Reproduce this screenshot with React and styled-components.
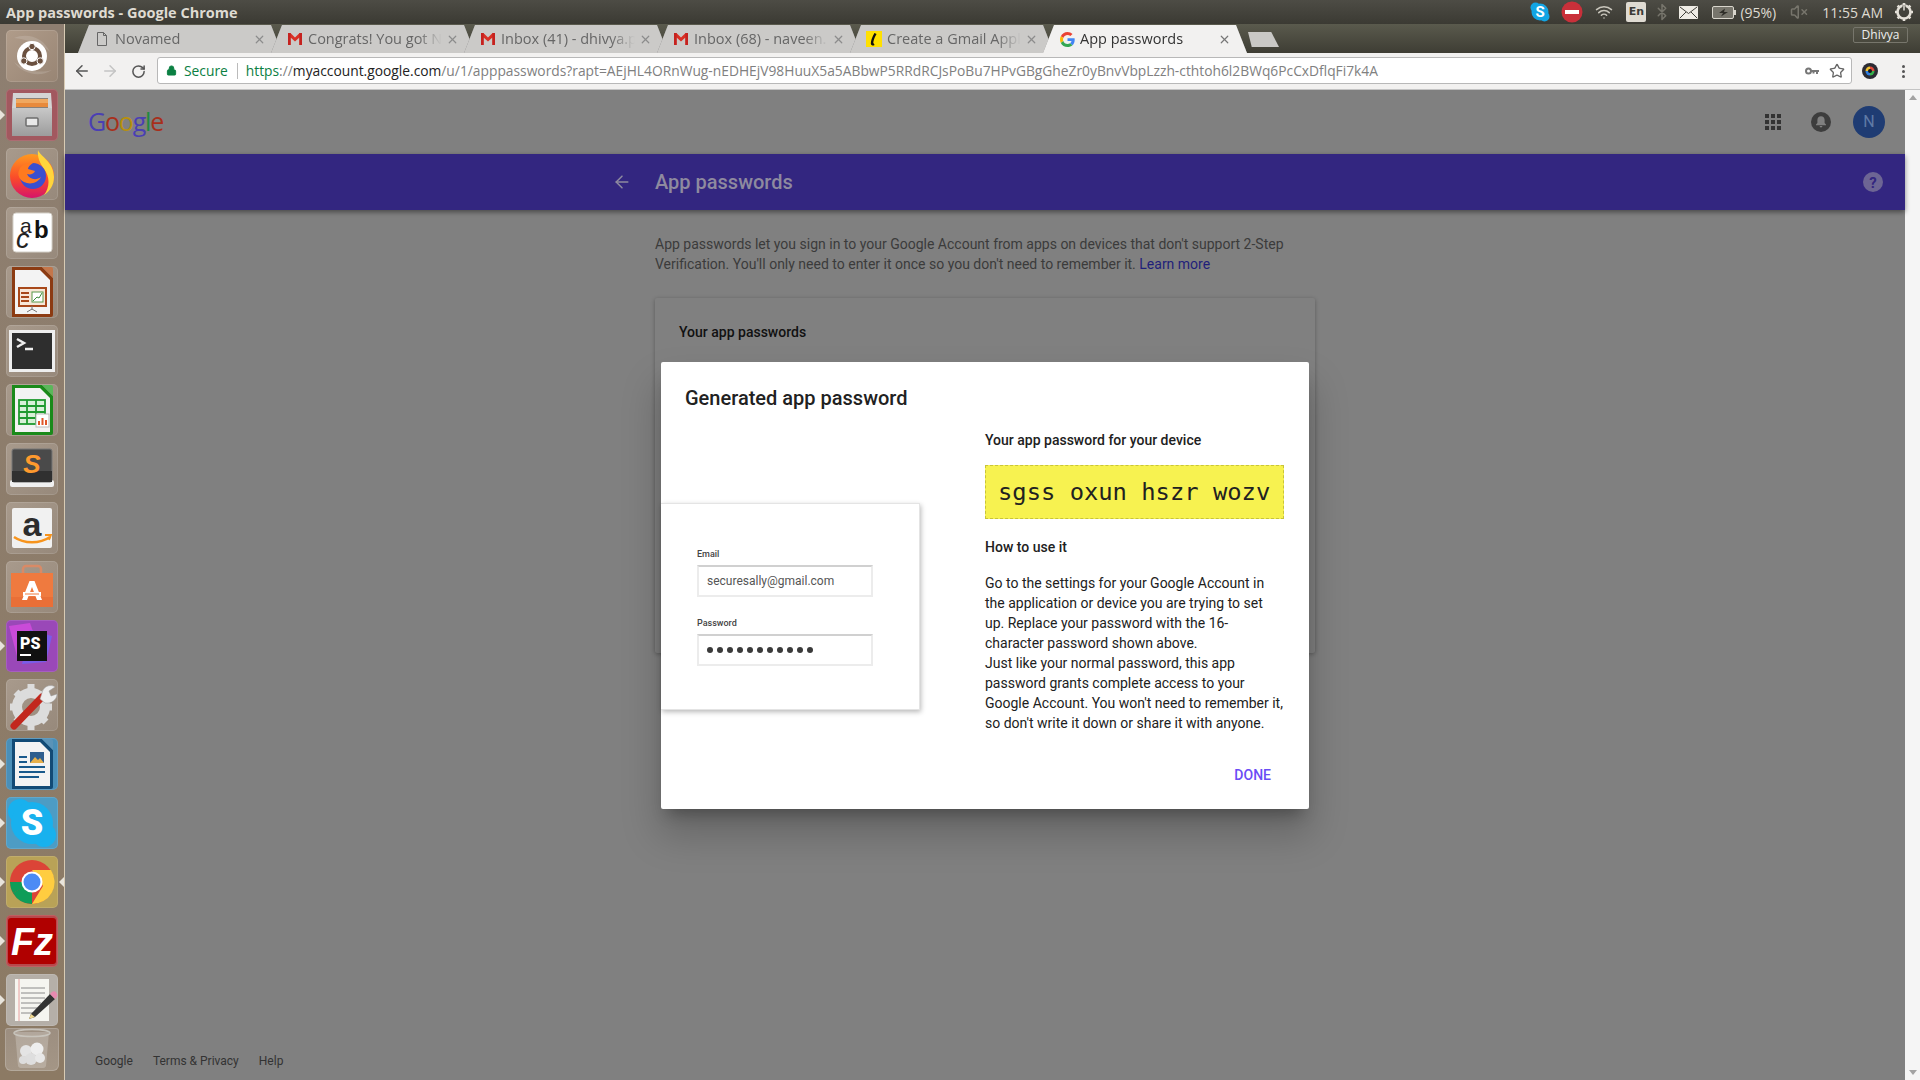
import React from "react"
import styled, { createGlobalStyle } from "styled-components"
import { ArrowLeft, ArrowRight, RotateCw, Lock, Star, Wifi, Bluetooth, VolumeX, X } from "lucide-react"

const GlobalStyle = createGlobalStyle`
  html, body { margin: 0; padding: 0; background: #808080; }
  * { box-sizing: border-box; }
  body { font-family: Roboto, "Liberation Sans", sans-serif; }
`

const GmailIcon = () => (
  <svg width="14" height="12" viewBox="0 0 14 12">
    <path d="M0 0h2.4L7 4.4 11.6 0H14v12h-2.6V4.6L7 8.6 2.6 4.6V12H0z" fill="#d93025" />
    <path d="M0 0h2.6v12H0zM11.4 0H14v12h-2.6z" fill="#c5221f" />
  </svg>
)

const FileIcon = () => (
  <svg width="12" height="14" viewBox="0 0 12 14" fill="none" stroke="#666" strokeWidth="1">
    <path d="M1.5 .5h6l3 3v10h-9zM7.5 .5v3h3" />
  </svg>
)

const GoogleG = () => (
  <svg width="15" height="15" viewBox="0 0 48 48">
    <path fill="#EA4335" d="M24 9.5c3.5 0 6.7 1.2 9.2 3.6l6.9-6.9C35.9 2.4 30.5 0 24 0 14.6 0 6.5 5.4 2.6 13.2l8 6.2C12.4 13.7 17.7 9.5 24 9.5z" />
    <path fill="#4285F4" d="M47 24.5c0-1.6-.1-3.100-.4-4.500H24v9h12.900c-.6 3-2.200 5.500-4.700 7.200l7.700 6C44.400 38.500 47 32.100 47 24.500z" />
    <path fill="#FBBC05" d="M10.600 28.600c-.5-1.400-.8-3-.8-4.600s.3-3.200.8-4.600l-8-6.200C.9 16.500 0 20.100 0 24s.9 7.500 2.600 10.800z" />
    <path fill="#34A853" d="M24 48c6.500 0 11.900-2.100 15.900-5.800l-7.700-6c-2.200 1.400-4.900 2.300-8.200 2.300-6.300 0-11.600-4.200-13.400-9.900l-8 6.200C6.500 42.600 14.600 48 24 48z" />
  </svg>
)

const LetterIcon = () => (
  <YellowFav>
    <svg width="16" height="16" viewBox="0 0 16 16">
      <path d="M9.500 2.500C7.500 6 6 10 6 12.500c0 1 .8 1.200 2 .5" fill="none" stroke="#111" strokeWidth="2.400" />
    </svg>
  </YellowFav>
)

const SkypeSmall = () => (
  <svg width="22" height="22" viewBox="0 0 22 22">
    <circle cx="6.500" cy="6.500" r="5" fill="#12a5e4" />
    <circle cx="15.500" cy="15.500" r="5" fill="#12a5e4" />
    <circle cx="11" cy="11" r="8.500" fill="#12a5e4" />
    <text x="11" y="16" textAnchor="middle" fontFamily="Roboto" fontWeight="700" fontSize="15" fill="#fff">S</text>
  </svg>
)

const NoEntry = () => (
  <svg width="22" height="22" viewBox="0 0 22 22">
    <circle cx="11" cy="11" r="10.500" fill="#c9303a" />
    <rect x="4" y="9" width="14" height="4" fill="#fff" />
  </svg>
)

const EnvelopeIcon = () => (
  <svg width="19" height="13" viewBox="0 0 19 13">
    <rect width="19" height="13" rx="1" fill="#efece5" />
    <path d="M1 1l8.500 6.500L18 1M1 12l6-6M18 12l-6-6" fill="none" stroke="#3f3e38" strokeWidth="1" />
  </svg>
)

const BatteryIcon = () => (
  <svg width="24" height="13" viewBox="0 0 24 13">
    <rect x=".5" y=".5" width="21" height="12" rx="1.500" fill="#77756c" stroke="#d8d5cc" />
    <rect x="22" y="4" width="2" height="5" fill="#d8d5cc" />
    <path d="M13 2.500 7 7h4l-2 3.500L16 6h-4z" fill="#2f2e29" />
  </svg>
)

const PowerCog = () => (
  <svg width="20" height="20" viewBox="0 0 20 20">
    <circle cx="10" cy="10" r="6.500" fill="none" stroke="#e4e0d8" strokeWidth="2.600" />
    <path d="M10 1v2M10 17v2M1 10h2M17 10h2M3.600 3.600 5 5M15 15l1.400 1.400M16.400 3.600 15 5M5 15l-1.400 1.400" stroke="#e4e0d8" strokeWidth="2.600" />
    <path d="M10 3.500v6" stroke="#3f3e38" strokeWidth="3" />
    <path d="M10 3.500v5" stroke="#e4e0d8" strokeWidth="1.500" />
  </svg>
)

const KeyIcon = () => (
  <svg width="14" height="8" viewBox="0 0 14 8">
    <circle cx="3.500" cy="4" r="2.500" fill="none" stroke="#777" strokeWidth="2" />
    <path d="M6 3h8v2h-1v2h-2V5H9.500v1.500h-2V5H6z" fill="#777" />
  </svg>
)

const AppsGrid = () => (
  <svg width="16" height="16" viewBox="0 0 16 16" fill="#333">
    {[0, 6, 12].map(y =>
      [0, 6, 12].map(x => <rect key={`${x}-${y}`} x={x} y={y} width="4" height="4" />)
    )}
  </svg>
)

const BellIcon = () => (
  <svg width="20" height="20" viewBox="0 0 20 20">
    <circle cx="10" cy="10" r="10" fill="#3d3d3d" />
    <path d="M10 4.200c-2.200 0-3.600 1.700-3.600 3.800v3L5 12.500v.7h10v-.7L13.600 11V8c0-2.100-1.400-3.800-3.600-3.800zM8.600 14h2.800a1.400 1.400 0 0 1-2.800 0z" fill="#808080" />
  </svg>
)

const HelpIcon = () => (
  <svg width="20" height="20" viewBox="0 0 20 20">
    <circle cx="10" cy="10" r="10" fill="#6d6594" />
    <text x="10" y="15.500" textAnchor="middle" fontFamily="Roboto" fontWeight="700" fontSize="15" fill="#332680">?</text>
  </svg>
)

const ExtensionIcon = () => (
  <svg width="16" height="16" viewBox="0 0 16 16">
    <circle cx="8" cy="8" r="8" fill="#2c2c34" />
    <path d="M8 3.500a4.500 4.500 0 0 1 4.500 4.500H8z" fill="#e04a3a" />
    <path d="M12.500 8A4.500 4.500 0 0 1 8 12.500V8z" fill="#37b24d" />
    <path d="M8 12.500A4.500 4.500 0 0 1 3.500 8H8z" fill="#2f7fe0" />
    <path d="M3.500 8A4.500 4.500 0 0 1 8 3.500V8z" fill="#f2c230" />
    <circle cx="8" cy="8" r="2" fill="#16161c" />
  </svg>
)

// Launcher icons
const DashIcon = () => (
  <svg width="52" height="52" viewBox="0 0 52 52">
    <path d="M8 8c14-6 30 0 36 14-8-8-20-12-36-14zM46 40C34 48 16 44 8 32c10 8 24 12 38 8z" fill="#fff" opacity=".14" />
    <circle cx="26" cy="26" r="15" fill="#fff" />
    <circle cx="26" cy="26" r="8" fill="none" stroke="#6b5140" strokeWidth="4" />
    <circle cx="26" cy="16.500" r="3.200" fill="#6b5140" stroke="#fff" />
    <circle cx="17.800" cy="31" r="3.200" fill="#6b5140" stroke="#fff" />
    <circle cx="34.200" cy="31" r="3.200" fill="#6b5140" stroke="#fff" />
  </svg>
)

const FilesIcon = () => (
  <svg width="52" height="52" viewBox="0 0 52 52">
    <defs>
      <linearGradient id="cabinetFront" x1="0" y1="0" x2="0" y2="1">
        <stop offset="0" stopColor="#c8c8c8" />
        <stop offset="1" stopColor="#9c9c9c" />
      </linearGradient>
    </defs>
    <path d="M7 4h38l1 15H6z" fill="#d4d4d4" />
    <path d="M10 9h32v10H10z" fill="#8a8078" />
    <path d="M10 10h32v4H10z" fill="#f0a860" />
    <path d="M10 14h32v4H10z" fill="#e88a3c" />
    <path d="M6 19h40v28H6z" fill="url(#cabinetFront)" />
    <rect x="20" y="29" width="12" height="8" rx="1" fill="#e8e8e8" stroke="#6c6c6c" strokeWidth="1.500" />
  </svg>
)

const FirefoxIcon = () => (
  <svg width="52" height="52" viewBox="0 0 52 52">
    <defs>
      <linearGradient id="ffBody" x1="0" y1="0" x2="0" y2="1">
        <stop offset="0" stopColor="#ff9a1f" />
        <stop offset=".55" stopColor="#fa4a2a" />
        <stop offset="1" stopColor="#d6146a" />
      </linearGradient>
    </defs>
    <circle cx="26" cy="28" r="22" fill="url(#ffBody)" />
    <path d="M32 2c2 6 16 12 16 27 0 8-4 14-10 18 6-8 6-18 0-26-4-6-7-12-6-19z" fill="#ffd53c" />
    <circle cx="27" cy="28" r="13" fill="#3a4fd0" />
    <path d="M14 20c3-4 8-6 13-5-3 2-5 4-5 6l7 2c-1 3-5 4-8 3 2 5 9 7 14 3-3 6-11 8-17 5-6-3-7-9-4-14z" fill="#ff7a1f" />
  </svg>
)

const AbcIcon = () => (
  <svg width="52" height="52" viewBox="0 0 52 52">
    <rect x="7" y="6" width="39" height="39" rx="3" fill="#fff" stroke="#d4d0c8" />
    <text x="14" y="26" fontFamily="Liberation Sans" fontSize="21" fill="#222">a</text>
    <text x="28" y="31" fontFamily="Liberation Sans" fontWeight="700" fontSize="24" fill="#111">b</text>
    <text x="10" y="41" fontFamily="Liberation Sans" fontStyle="italic" fontSize="27" fill="#222">c</text>
  </svg>
)

const OfficeDoc = ({ color, corner, children }) => (
  <svg width="52" height="52" viewBox="0 0 52 52">
    <path d="M6 1h30l11 11v37a2 2 0 0 1-2 2H6z" fill={color} />
    <path d="M9 4h25l10 10v34H9z" fill="#f3f3f3" />
    <path d="M36 1h9a2 2 0 0 1 2 2v9z" fill={corner} />
    {children}
  </svg>
)

const ImpressIcon = () => (
  <OfficeDoc color="#8c3b12" corner="#c4764a">
    <rect x="13" y="22" width="27" height="18" fill="#f7e7d8" stroke="#a8481a" strokeWidth="2" />
    <path d="M15 26h8v2h-8zM15 30h8v2h-8zM15 34h8v2h-8z" fill="#a8481a" />
    <rect x="26" y="26" width="11" height="10" fill="#fff" stroke="#5a9a4a" />
    <path d="M27 35l4-4 2 1 3-5" stroke="#3c8a3c" fill="none" />
    <path d="M26 40v4M21 46l5-3 5 3" stroke="#777" fill="none" />
  </OfficeDoc>
)

const TerminalIcon = () => (
  <svg width="52" height="52" viewBox="0 0 52 52">
    <rect x="3" y="5" width="46" height="42" fill="#eee" />
    <rect x="6" y="8" width="40" height="36" fill="#2e2e2e" />
    <path d="M11 14l7 4-7 4" stroke="#eee" strokeWidth="2.500" fill="none" />
    <path d="M19 24h8" stroke="#eee" strokeWidth="2.500" />
  </svg>
)

const CalcIcon = () => (
  <OfficeDoc color="#1a8a1a" corner="#5ab85a">
    <g fill="#fff" stroke="#1f9a2f" strokeWidth="1.800">
      <rect x="13" y="16" width="26" height="24" fill="#d8f0d8" />
      <path d="M13 22h26M13 28h26M13 34h26M21 16v24M30 16v24" fill="none" />
    </g>
    <rect x="30" y="30" width="13" height="13" fill="#fff" stroke="#bbb" />
    <path d="M33 41v-4M36.500 41v-7M40 41v-5" strokeWidth="2" stroke="#e0562a" />
  </OfficeDoc>
)

const SublimeIcon = () => (
  <svg width="52" height="52" viewBox="0 0 52 52">
    <rect x="4" y="37" width="44" height="7" rx="2" fill="#f0f0f0" />
    <rect x="6" y="6" width="40" height="33" rx="2" fill="#4a4a4a" stroke="#777" />
    <path d="M6 28h40v11H6z" fill="#303030" />
    <text x="26" y="30" textAnchor="middle" fontFamily="Liberation Sans" fontStyle="italic" fontWeight="700" fontSize="26" fill="#ff9a2e">S</text>
  </svg>
)

const AmazonIcon = () => (
  <svg width="52" height="52" viewBox="0 0 52 52">
    <rect x="6" y="6" width="40" height="40" rx="2" fill="#f1f1f1" />
    <text x="26" y="34" textAnchor="middle" fontFamily="Liberation Sans" fontWeight="700" fontSize="34" fill="#2d2d2d">a</text>
    <path d="M8 35c10 7 26 7 36 0" fill="none" stroke="#f7941d" strokeWidth="2.500" />
    <path d="M39 33h6l-2 5" fill="none" stroke="#f7941d" strokeWidth="1.800" />
  </svg>
)

const StoreIcon = () => (
  <svg width="52" height="52" viewBox="0 0 52 52">
    <path d="M17 13V8a3 3 0 0 1 3-3h12a3 3 0 0 1 3 3v5" fill="none" stroke="#d98a66" strokeWidth="2.500" />
    <path d="M5 12h42v34H5z" fill="#ef7a3f" />
    <path d="M5 36h42v10H5z" fill="#e96f37" />
    <path d="M23.500 20h5L36 39h-5l-5-13-5 13h-5z" fill="#fff" />
    <path d="M17 31h18v4H17z" fill="#fff" />
    <path d="M19 33h14" stroke="#ef7a3f" />
  </svg>
)

const PhpStormIcon = () => (
  <svg width="52" height="52" viewBox="0 0 52 52">
    <path d="M3 6 24 3 30 20 12 40z" fill="#c94bd8" />
    <path d="M24 10 46 16 40 42 16 44z" fill="#7a5ce8" />
    <rect x="11" y="11" width="30" height="30" fill="#111" />
    <text x="14" y="29" fontFamily="Roboto" fontWeight="900" fontSize="16" fill="#fff">PS</text>
    <rect x="14" y="34" width="11" height="2" fill="#fff" />
  </svg>
)

const ToolsIcon = () => (
  <svg width="52" height="52" viewBox="0 0 52 52">
    <circle cx="25" cy="28" r="14" fill="none" stroke="#dcdcdc" strokeWidth="10" />
    <path d="M25 5v6M25 45v6M4 28h6M40 28h6M10 13l5 5M35 38l5 5M40 13l-5 5M15 38l-5 5" stroke="#dcdcdc" strokeWidth="7" />
    <path d="M8 47 36 18" stroke="#c2281e" strokeWidth="7" strokeLinecap="round" />
    <path d="M34 20l3-9c2-4 8-6 12-3l-6 4 2 5 6-2c0 6-6 10-12 9z" fill="#ececec" stroke="#999" strokeWidth=".5" />
  </svg>
)

const WriterIcon = () => (
  <OfficeDoc color="#124a75" corner="#5a93b8">
    <path d="M13 18h8v2h-8zM13 23h8v2h-8zM13 28h26v2H13zM13 33h26v2H13zM13 38h20v2H13z" fill="#1a5a8c" />
    <rect x="24" y="14" width="14" height="11" fill="#2e5e8e" />
    <path d="M24 25l5-6 3 3 2-2 4 5z" fill="#e8b04a" />
  </OfficeDoc>
)

const SkypeIcon = () => (
  <svg width="52" height="52" viewBox="0 0 52 52">
    <circle cx="14" cy="14" r="12" fill="#18b1ee" />
    <circle cx="38" cy="38" r="12" fill="#18b1ee" />
    <circle cx="26" cy="26" r="21" fill="#18b1ee" />
    <text x="26" y="38" textAnchor="middle" fontFamily="Roboto" fontWeight="900" fontSize="36" fill="#fff">S</text>
  </svg>
)

const ChromeIcon = () => (
  <svg width="52" height="52" viewBox="0 0 52 52">
    <circle cx="26" cy="26" r="22" fill="#db4437" />
    <path d="M26 26 7 37A22 22 0 0 0 26 48z" fill="#0f9d58" />
    <path d="M26 26H4v0a22 22 0 0 0 3 11l11-6z" fill="#0f9d58" />
    <path d="M26 14h19a22 22 0 0 1-19 34l11-18z" fill="#ffcd40" />
    <circle cx="26" cy="26" r="10.500" fill="#fff" />
    <circle cx="26" cy="26" r="8.500" fill="#4c8bf5" />
  </svg>
)

const FileZillaIcon = () => (
  <svg width="52" height="52" viewBox="0 0 52 52">
    <rect x="2" y="3" width="48" height="46" rx="3" fill="#b00000" />
    <text x="26" y="40" textAnchor="middle" fontFamily="Liberation Sans" fontStyle="italic" fontWeight="700" fontSize="38" fill="#fff">Fz</text>
  </svg>
)

const EditorIcon = () => (
  <svg width="52" height="52" viewBox="0 0 52 52">
    <rect x="9" y="5" width="34" height="42" fill="#f5f5f0" />
    <path d="M13 5v42" stroke="#e8a0a0" />
    <path d="M15 14h24M15 19h24M15 24h24M15 29h20M15 34h16M15 39h14" stroke="#8a8a8a" />
    <path d="M25 40 44 20l5 5-20 18-6 2z" fill="#333" />
    <path d="M44 20l2-2c1-1 3-1 4 0l1 2c1 1 0 3-1 4l-1 1z" fill="#e88ab0" />
    <path d="M25 40l4 3-6 2z" fill="#f0d890" />
  </svg>
)

const TrashIcon = () => (
  <svg width="52" height="44" viewBox="0 0 52 44">
    <path d="M9 5h34l-3 34a3 3 0 0 1-3 2H15a3 3 0 0 1-3-2z" fill="#fff" opacity=".22" />
    <ellipse cx="26" cy="6" rx="18" ry="3.500" fill="none" stroke="#c8c4bc" strokeWidth="1.500" />
    <circle cx="20" cy="24" r="6" fill="#e4e4e4" />
    <circle cx="31" cy="22" r="6.500" fill="#eee" />
    <circle cx="25" cy="32" r="6" fill="#dedede" />
    <circle cx="34" cy="31" r="5" fill="#e8e8e8" />
    <circle cx="17" cy="33" r="4" fill="#ddd" />
  </svg>
)

const launcherItems = [
  { id: "dash", icon: <DashIcon />, tint: "linear-gradient(135deg,#b09c8a,#988574)" },
  { id: "files", icon: <FilesIcon />, tint: "#a2585f", pip: true },
  { id: "firefox", icon: <FirefoxIcon /> },
  { id: "abc", icon: <AbcIcon /> },
  { id: "impress", icon: <ImpressIcon /> },
  { id: "terminal", icon: <TerminalIcon /> },
  { id: "calc", icon: <CalcIcon /> },
  { id: "sublime", icon: <SublimeIcon /> },
  { id: "amazon", icon: <AmazonIcon /> },
  { id: "store", icon: <StoreIcon /> },
  { id: "phpstorm", icon: <PhpStormIcon />, tint: "#9a48b8", pip: true },
  { id: "tools", icon: <ToolsIcon /> },
  { id: "writer", icon: <WriterIcon />, tint: "#4a8fb8", pip: true },
  { id: "skype", icon: <SkypeIcon />, tint: "#4d9cc4", pip: true },
  { id: "chrome", icon: <ChromeIcon />, tint: "#b9a257", pip: true, active: true },
  { id: "filezilla", icon: <FileZillaIcon />, tint: "#b8484c", pip: true },
  { id: "editor", icon: <EditorIcon />, tint: "#b5afa8", pip: true }
]

const tabs = [
  { title: "Novamed", icon: <FileIcon /> },
  { title: "Congrats! You got N", icon: <GmailIcon /> },
  { title: "Inbox (41) - dhivya.p", icon: <GmailIcon /> },
  { title: "Inbox (68) - naveen.", icon: <GmailIcon /> },
  { title: "Create a Gmail Appl", icon: <LetterIcon /> },
  { title: "App passwords", icon: <GoogleG />, active: true }
]

const googleLetters = [
  ["G", "#4a3fb4"],
  ["o", "#a82f1c"],
  ["o", "#b8900c"],
  ["g", "#4a3fb4"],
  ["l", "#1f8a3e"],
  ["e", "#a82f1c"]
]

const App = () => {
  return (
    <Screen>
      <GlobalStyle />
      <TopBar>
        <WindowTitle>App passwords - Google Chrome</WindowTitle>
        <Indicators>
          <Indicator>
            <SkypeSmall />
          </Indicator>
          <Indicator space={10}>
            <NoEntry />
          </Indicator>
          <Indicator space={12}>
            <Wifi size={18} color="#c9c6bc" />
          </Indicator>
          <Indicator space={13}>
            <LangBox>En</LangBox>
          </Indicator>
          <Indicator space={7}>
            <Bluetooth size={18} color="#77756c" />
          </Indicator>
          <Indicator space={8}>
            <EnvelopeIcon />
          </Indicator>
          <Indicator space={14}>
            <BatteryIcon />
          </Indicator>
          <Indicator space={4}>
            <IndicatorText>(95%)</IndicatorText>
          </Indicator>
          <Indicator space={14}>
            <VolumeX size={18} color="#77756c" />
          </Indicator>
          <Indicator space={14}>
            <IndicatorText>11:55 AM</IndicatorText>
          </Indicator>
          <Indicator space={11}>
            <PowerCog />
          </Indicator>
        </Indicators>
      </TopBar>
      <Main>
        <Launcher>
          {launcherItems.map(item => (
            <Tile key={item.id} tint={item.tint}>
              {item.pip && <Pip />}
              {item.icon}
              {item.active && <ActivePip />}
            </Tile>
          ))}
          <TrashTile>
            <TrashIcon />
          </TrashTile>
        </Launcher>
        <ChromeWindow>
          <TabStrip>
            {tabs.map(tab => (
              <Tab key={tab.title} active={tab.active}>
                <FavSlot>{tab.icon}</FavSlot>
                <TabLabel active={tab.active}>{tab.title}</TabLabel>
                <TabClose>
                  <X size={13} strokeWidth={2.2} color={tab.active ? "#777" : "#8c8c8c"} />
                </TabClose>
              </Tab>
            ))}
            <NewTab />
            <Profile>Dhivya</Profile>
          </TabStrip>
          <Toolbar>
            <NavButton>
              <ArrowLeft size={18} color="#555" strokeWidth={2} />
            </NavButton>
            <NavButton>
              <ArrowRight size={18} color="#c4c4c4" strokeWidth={2} />
            </NavButton>
            <NavButton>
              <RotateCw size={15} color="#555" strokeWidth={2.4} />
            </NavButton>
            <Omnibox>
              <Lock size={11} color="#0b8043" fill="#0b8043" />
              <SecureText>Secure</SecureText>
              <OmniDivider />
              <Url>
                <UrlScheme>https</UrlScheme>
                ://
                <UrlHost>myaccount.google.com</UrlHost>
                /u/1/apppasswords?rapt=AEjHL4ORnWug-nEDHEjV98HuuX5a5ABbwP5RRdRCJsPoBu7HPvGBgGheZr0yBnvVbpLzzh-cthtoh6l2BWq6PcCxDflqFi7k4A
              </Url>
              <OmniActions>
                <KeyIcon />
                <Star size={16} color="#666" />
              </OmniActions>
            </Omnibox>
            <ToolbarEnd>
              <ExtensionIcon />
              <Kebab>
                <i />
                <i />
                <i />
              </Kebab>
            </ToolbarEnd>
          </Toolbar>
          <Viewport>
            <Page>
              <Header>
                <GoogleLogo>
                  {googleLetters.map(([letter, color], i) => (
                    <LogoLetter key={i} color={color}>
                      {letter}
                    </LogoLetter>
                  ))}
                </GoogleLogo>
                <HeaderActions>
                  <AppsSlot>
                    <AppsGrid />
                  </AppsSlot>
                  <BellIcon />
                  <Avatar>N</Avatar>
                </HeaderActions>
              </Header>
              <Band>
                <BandLeft>
                  <BandBack>
                    <ArrowLeft size={20} color="#8e8a9f" strokeWidth={1.8} />
                  </BandBack>
                </BandLeft>
                <BandTitle>App passwords</BandTitle>
                <BandRight>
                  <HelpSlot>
                    <HelpIcon />
                  </HelpSlot>
                </BandRight>
              </Band>
              <Content>
                <Intro>
                  App passwords let you sign in to your Google Account from apps on devices that don't support 2-Step
                  Verification. You'll only need to enter it once so you don't need to remember it.{" "}
                  <LearnMore>Learn more</LearnMore>
                </Intro>
                <Card>
                  <CardTitle>Your app passwords</CardTitle>
                </Card>
              </Content>
              <Footer>
                <FooterLink>Google</FooterLink>
                <FooterLink>Terms &amp; Privacy</FooterLink>
                <FooterLink>Help</FooterLink>
              </Footer>
              <Dialog>
                <DialogTitle>Generated app password</DialogTitle>
                <DialogBody>
                  <Illustration>
                    <FieldLabel>Email</FieldLabel>
                    <FakeInput>securesally@gmail.com</FakeInput>
                    <FieldLabel second>Password</FieldLabel>
                    <FakeInput>
                      <Dots>
                        {Array.from({ length: 11 }).map((_, i) => (
                          <i key={i} />
                        ))}
                      </Dots>
                    </FakeInput>
                  </Illustration>
                  <Instructions>
                    <Subhead>Your app password for your device</Subhead>
                    <PasswordBox>sgss oxun hszr wozv</PasswordBox>
                    <HowTo>How to use it</HowTo>
                    <Steps>
                      Go to the settings for your Google Account in the application or device you are trying to set up.
                      Replace your password with the 16-character password shown above.
                      <br />
                      Just like your normal password, this app password grants complete access to your Google Account.
                      You won't need to remember it, so don't write it down or share it with anyone.
                    </Steps>
                  </Instructions>
                </DialogBody>
                <DialogActions>
                  <DoneButton>DONE</DoneButton>
                </DialogActions>
              </Dialog>
            </Page>
            <Scrollbar>
              <ScrollArrow />
              <ScrollArrow down />
            </Scrollbar>
          </Viewport>
        </ChromeWindow>
      </Main>
    </Screen>
  )
}

export default App

const Screen = styled.div`
  width: 1920px;
  height: 1080px;
  overflow: hidden;
  display: flex;
  flex-direction: column;
`

// Ubuntu top panel
const TopBar = styled.div`
  height: 24px;
  flex: none;
  display: flex;
  align-items: center;
  justify-content: space-between;
  padding: 0 6px;
  background: linear-gradient(#4d4c45, #3b3a33);
`
const WindowTitle = styled.div`
  font-family: "Open Sans", sans-serif;
  font-size: 14.5px;
  font-weight: 700;
  color: #dfdbd2;
`
const Indicators = styled.div`
  display: flex;
  align-items: center;
  color: #dfdbd2;
`
const Indicator = styled.div`
  display: flex;
  align-items: center;
  margin-left: ${props => props.space || 0}px;
`
const LangBox = styled.div`
  width: 20px;
  height: 20px;
  border-radius: 2px;
  background: #dfdbd2;
  color: #3c3b37;
  font-family: "DejaVu Sans", sans-serif;
  font-size: 11px;
  font-weight: 700;
  text-align: center;
  line-height: 20px;
`
const IndicatorText = styled.span`
  font-family: "Open Sans", sans-serif;
  font-size: 14px;
  color: #dfdbd2;
  white-space: nowrap;
`

const Main = styled.div`
  flex: 1;
  min-height: 0;
  display: flex;
`

// Launcher
const Launcher = styled.div`
  width: 65px;
  flex: none;
  display: flex;
  flex-direction: column;
  align-items: center;
  gap: 7px;
  padding: 6px 1px 0 0;
  background: linear-gradient(#8e7f71, #8c7a64);
  border-right: 1px solid #d8cbb4;
`
const Tile = styled.div`
  position: relative;
  width: 52px;
  height: 52px;
  flex: none;
  border-radius: 5px;
  background: ${props => props.tint || "linear-gradient(135deg, #a89a8c, #97897b)"};
  box-shadow: inset 0 0 0 1px rgba(255, 255, 255, 0.12);

  svg {
    display: block;
  }
`
const TrashTile = styled.div`
  width: 54px;
  height: 43px;
  flex: none;
  margin-top: -5px;
  border-radius: 3px 3px 6px 6px;
  background: linear-gradient(#9c8e80, #a49686);
  box-shadow: inset 0 0 0 1px rgba(255, 255, 255, 0.18);

  svg {
    display: block;
    margin: -1px auto 0;
  }
`
const Pip = styled.span`
  position: absolute;
  left: -6px;
  top: 21px;
  border-style: solid;
  border-width: 5px 0 5px 5px;
  border-color: transparent transparent transparent #e8e4dc;
`
const ActivePip = styled.span`
  position: absolute;
  right: -6px;
  top: 21px;
  border-style: solid;
  border-width: 5px 5px 5px 0;
  border-color: transparent #e8e4dc transparent transparent;
`

// Chrome window
const ChromeWindow = styled.div`
  flex: 1;
  min-width: 0;
  display: flex;
  flex-direction: column;
`
const TabStrip = styled.div`
  height: 29px;
  flex: none;
  display: flex;
  align-items: flex-end;
  padding-left: 13px;
  background: linear-gradient(#5a5a4d, #3e3d34);
`
const Tab = styled.div`
  position: relative;
  z-index: ${props => (props.active ? 2 : 1)};
  width: 204px;
  height: 28px;
  flex: none;
  margin-right: -11px;
  padding-left: 16px;
  display: flex;
  align-items: center;
  font-family: "Open Sans", sans-serif;
  font-size: 14.5px;
  filter: drop-shadow(0 0 0.5px #777);

  &::before {
    content: "";
    position: absolute;
    inset: 0;
    background: ${props => (props.active ? "#f2f1f0" : "#cbcac8")};
    clip-path: polygon(11px 0, calc(100% - 11px) 0, 100% 100%, 0 100%);
  }
`
const FavSlot = styled.div`
  position: relative;
  width: 16px;
  height: 16px;
  flex: none;
  display: flex;
  align-items: center;
  justify-content: center;
`
const YellowFav = styled.div`
  width: 16px;
  height: 16px;
  background: #ffe000;
`
const TabLabel = styled.div`
  position: relative;
  width: 134px;
  margin: -2px 0 0 5px;
  overflow: hidden;
  white-space: nowrap;
  color: ${props => (props.active ? "#333" : "#666")};
  ${props => !props.active && "mask-image: linear-gradient(90deg, #000 82%, transparent 100%);"}
`
const TabClose = styled.div`
  position: relative;
  margin-left: 3px;
  width: 14px;
  height: 14px;
  display: flex;
  align-items: center;
  justify-content: center;
`
const NewTab = styled.div`
  width: 31px;
  height: 15px;
  flex: none;
  margin: 0 0 6px 12px;
  background: #c9c8c5;
  clip-path: polygon(0 0, 75% 0, 100% 100%, 12% 100%);
`
const Profile = styled.div`
  margin: 0 12px 10px auto;
  width: 55px;
  height: 16px;
  border: 1px solid #77766c;
  border-radius: 2px;
  font-family: "Open Sans", sans-serif;
  font-size: 12px;
  line-height: 14px;
  color: #eeeeee;
  text-align: center;
`
const Toolbar = styled.div`
  height: 37px;
  flex: none;
  display: flex;
  align-items: center;
  background: #f2f1f0;
  border-bottom: 1px solid #c4c4c4;
`
const NavButton = styled.div`
  width: 28px;
  height: 23px;
  display: flex;
  align-items: center;
  justify-content: center;

  &:first-child {
    margin-left: 3px;
  }
`
const Omnibox = styled.div`
  width: 1695px;
  height: 27px;
  margin-left: 5px;
  margin-top: -1px;
  flex: none;
  display: flex;
  align-items: center;
  padding: 0 6px 0 8px;
  background: #fff;
  border: 1px solid #b8b8b8;
  border-radius: 3px;
`
const SecureText = styled.span`
  margin-left: 7px;
  font-family: "Open Sans", sans-serif;
  font-size: 13.8px;
  color: #0b8043;
`
const OmniDivider = styled.span`
  width: 1px;
  height: 16px;
  margin: 0 8px 0 9px;
  background: #bbb;
`
const Url = styled.div`
  font-family: "Open Sans", sans-serif;
  font-size: 13.8px;
  color: #808080;
  white-space: nowrap;
`
const UrlScheme = styled.span`
  color: #0b8043;
`
const UrlHost = styled.span`
  color: #222;
`
const OmniActions = styled.div`
  margin-left: auto;
  display: flex;
  align-items: center;
  gap: 10px;
`
const ToolbarEnd = styled.div`
  flex: 1;
  display: flex;
  align-items: center;
  justify-content: space-between;
  padding: 0 15px 0 10px;
`
const Kebab = styled.div`
  display: flex;
  flex-direction: column;
  gap: 2px;

  i {
    display: block;
    width: 3px;
    height: 3px;
    border-radius: 50%;
    background: #555;
  }
`

// Page
const Viewport = styled.div`
  flex: 1;
  min-height: 0;
  display: flex;
`
const Page = styled.div`
  position: relative;
  flex: 1;
  display: flex;
  flex-direction: column;
  background: #808080;
`
const Header = styled.header`
  height: 64px;
  flex: none;
  display: flex;
  align-items: center;
  justify-content: space-between;
  padding: 0 20px 0 23px;
`
const GoogleLogo = styled.div`
  font-family: "Open Sans", sans-serif;
  font-size: 25px;
  letter-spacing: -1.2px;
  line-height: 1;
  margin-top: -2px;
`
const LogoLetter = styled.span`
  color: ${props => props.color};
`
const HeaderActions = styled.div`
  display: flex;
  align-items: center;
  gap: 22px;

  svg {
    display: block;
  }
`
const AppsSlot = styled.div`
  margin-right: 8px;
`
const Avatar = styled.div`
  width: 32px;
  height: 32px;
  border-radius: 50%;
  background: #1f3c73;
  color: #5f7aa6;
  font-size: 16px;
  line-height: 32px;
  text-align: center;
`
const Band = styled.div`
  height: 56px;
  flex: none;
  display: flex;
  align-items: center;
  background: #332680;
  box-shadow: 0 2px 5px rgba(0, 0, 0, 0.45);
`
const BandLeft = styled.div`
  flex: 1;
  display: flex;
  justify-content: flex-end;
`
const BandRight = styled.div`
  flex: 1;
  display: flex;
  justify-content: flex-end;
`
const HelpSlot = styled.div`
  margin-right: 22px;
  height: 20px;
`
const BandBack = styled.div`
  margin-right: 23px;
  height: 20px;
`
const BandTitle = styled.h1`
  width: 660px;
  margin: 0;
  font-size: 20px;
  font-weight: 500;
  color: #8e8a9f;
`
const Content = styled.main`
  width: 660px;
  align-self: center;
  padding-top: 24px;
`
const Intro = styled.p`
  margin: 0;
  font-size: 14px;
  line-height: 20px;
  color: #3b3b3b;
`
const LearnMore = styled.a`
  color: #1f1f7a;
`
const Card = styled.section`
  height: 355px;
  margin-top: 24px;
  padding: 24px;
  background: #808080;
  border-radius: 2px;
  box-shadow: 0 1px 4px rgba(0, 0, 0, 0.3);
`
const CardTitle = styled.h2`
  margin: 0;
  font-size: 14px;
  font-weight: 500;
  line-height: 20px;
  color: #111;
`
const Footer = styled.footer`
  margin-top: auto;
  display: flex;
  gap: 20px;
  padding: 0 0 11px 30px;
`
const FooterLink = styled.a`
  font-size: 12px;
  line-height: 16px;
  color: #333;
`

// Dialog over the page
const Dialog = styled.div`
  position: absolute;
  top: 272px;
  left: 50%;
  width: 648px;
  height: 447px;
  margin-left: -324px;
  padding-top: 24px;
  background: #fff;
  border-radius: 2px;
  box-shadow: 0 11px 15px -7px rgba(0, 0, 0, 0.3), 0 24px 38px 3px rgba(0, 0, 0, 0.2);
`
const DialogTitle = styled.h2`
  margin: 0;
  padding-left: 24px;
  font-size: 20px;
  font-weight: 500;
  line-height: 24px;
  color: #212121;
`
const DialogBody = styled.div`
  display: flex;
  align-items: flex-start;
  margin-top: 20px;
`
const Illustration = styled.div`
  width: 259px;
  height: 207px;
  flex: none;
  margin-top: 73px;
  padding: 44px 0 0 36px;
  background: #fff;
  border: 1px solid #e4e4e4;
  border-left: 0;
  box-shadow: 1px 2px 5px rgba(0, 0, 0, 0.28);
`
const FieldLabel = styled.div`
  height: 12px;
  margin-top: ${props => (props.second ? "20px" : "0")};
  font-size: 9px;
  font-weight: 500;
  line-height: 12px;
  color: #444;
`
const FakeInput = styled.div`
  width: 176px;
  height: 32px;
  margin-top: 5px;
  padding-left: 8px;
  display: flex;
  align-items: center;
  border: 2px solid #ececec;
  border-top-color: #d0d0d0;
  font-size: 12px;
  color: #555;
`
const Dots = styled.div`
  display: flex;
  gap: 4px;

  i {
    display: block;
    width: 6px;
    height: 6px;
    border-radius: 50%;
    background: #3a3a3a;
  }
`
const Instructions = styled.div`
  width: 299px;
  margin-left: 65px;
  flex: none;
`
const Subhead = styled.div`
  font-size: 14px;
  font-weight: 500;
  line-height: 20px;
  color: #212121;
`
const PasswordBox = styled.div`
  height: 54px;
  margin-top: 15px;
  padding-left: 12px;
  background: #f7f250;
  border: 1px dashed #c9c43a;
  font-family: "DejaVu Sans Mono", monospace;
  font-size: 23.8px;
  line-height: 52px;
  color: #212121;
  white-space: nowrap;
`
const HowTo = styled(Subhead)`
  margin-top: 18px;
`
const Steps = styled.p`
  margin: 16px 0 0;
  font-size: 14px;
  line-height: 20px;
  color: #212121;
`
const DialogActions = styled.div`
  display: flex;
  justify-content: flex-end;
  padding-right: 38px;
  margin-top: 32px;
`
const DoneButton = styled.div`
  font-size: 14px;
  font-weight: 500;
  line-height: 20px;
  color: #6a4cf5;
`

const Scrollbar = styled.div`
  width: 15px;
  flex: none;
  display: flex;
  flex-direction: column;
  justify-content: space-between;
  align-items: center;
  padding: 5px 0;
  background: #f5f5f5;
`
const ScrollArrow = styled.span`
  border-style: solid;
  border-width: ${props => (props.down ? "5px 4px 0 4px" : "0 4px 5px 4px")};
  border-color: ${props =>
    props.down ? "#a3a3a3 transparent transparent transparent" : "transparent transparent #a3a3a3 transparent"};
`
